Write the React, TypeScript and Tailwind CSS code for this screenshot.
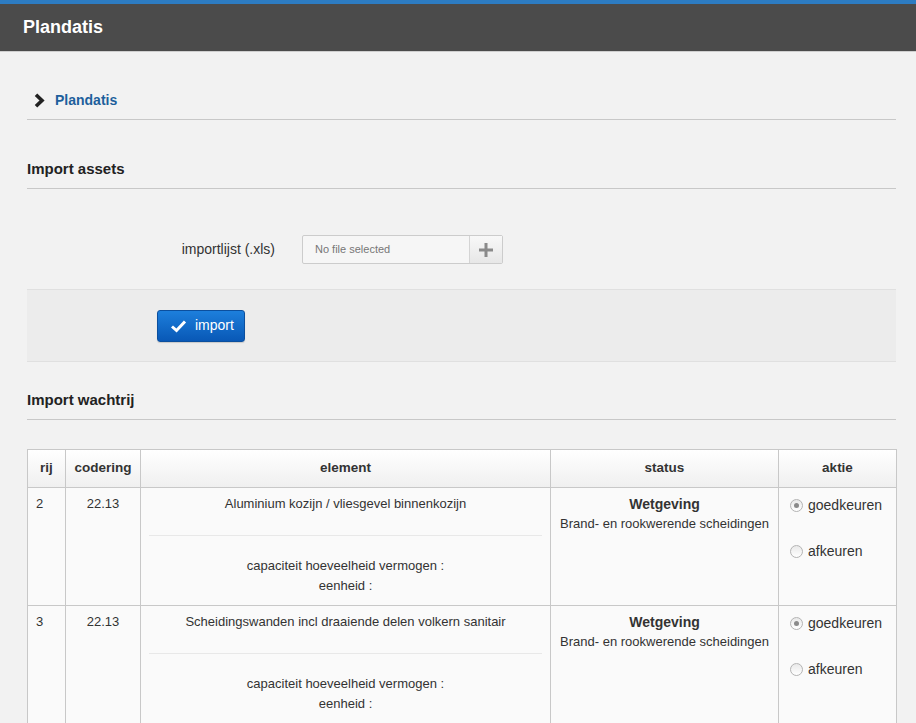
import * as React from "react";

const font = { fontFamily: '"Liberation Sans", Arial, sans-serif' };

interface QueueItem {
  rij: number;
  codering: string;
  element: string;
  status: string;
  detail: string;
}

const items: QueueItem[] = [
  {
    rij: 2,
    codering: "22.13",
    element: "Aluminium kozijn / vliesgevel binnenkozijn",
    status: "Wetgeving",
    detail: "Brand- en rookwerende scheidingen",
  },
  {
    rij: 3,
    codering: "22.13",
    element: "Scheidingswanden incl draaiende delen volkern sanitair",
    status: "Wetgeving",
    detail: "Brand- en rookwerende scheidingen",
  },
];

const Radio: React.FC<{ checked?: boolean; label: string }> = ({ checked, label }) => (
  <label className="flex items-center gap-[5px] h-5 cursor-pointer">
    <span className="relative w-[13px] h-[13px] rounded-full border border-[#b4b4b4] bg-gradient-to-b from-[#e9e9e9] to-[#ffffff] flex items-center justify-center">
      {checked && <span className="w-[5px] h-[5px] rounded-full bg-[#8a8a8a]" />}
    </span>
    <span className="text-[14px] text-[#333]">{label}</span>
  </label>
);

const SectionTitle: React.FC<{ children: React.ReactNode }> = ({ children }) => (
  <div className="border-b border-[#c8c8c8] pb-[9px]">
    <h2 className="text-[15px] font-bold text-[#222] leading-5">{children}</h2>
  </div>
);

const th = "border border-[#c8c8c8] font-bold text-[#333] text-[13.5px]";
const td = "border border-[#c8c8c8] px-[8px] pt-[6px] pb-[9px] leading-5";

export default function App() {
  return (
    <div className="min-h-[723px] bg-[#f2f2f2] text-[#333]" style={font}>
      <div className="h-[4px] bg-[#2d7cc2]" />
      <header className="h-[48px] bg-[#4b4b4b] border-b border-[#cfcfcf] flex items-center px-[23px]">
        <h1 className="text-[18px] font-bold text-white">Plandatis</h1>
      </header>

      <main className="px-[27px] pr-[20px]">
        <div className="flex items-end gap-[9px] h-[68px] pb-[9px] border-b border-[#c8c8c8]">
          <div className="h-5 flex items-center">
            <svg width="13" height="15" viewBox="0 0 13 15" className="ml-[6px]">
              <polyline points="3,1.8 9,7.5 3,13.2" fill="none" stroke="#222" strokeWidth="3.6" />
            </svg>
          </div>
          <span className="text-[14px] font-bold text-[#1d5f9c] leading-5">Plandatis</span>
        </div>

        <div className="pt-[39px]">
          <SectionTitle>Import assets</SectionTitle>
        </div>

        <div className="flex items-start h-[100px] pt-[46px]">
          <label className="w-[275px] h-[29px] flex items-center justify-end text-[14px] text-[#333] pr-[27px]">
            importlijst (.xls)
          </label>
          <div className="flex h-[29px] w-[201px] border border-[#cccccc] rounded-[2px] bg-[#f6f6f6]">
            <div className="flex-1 flex items-center pl-[12px] text-[11px] text-[#777]">No file selected</div>
            <button className="w-[33px] border-l border-[#d4d4d4] bg-gradient-to-b from-[#f8f8f8] to-[#e7e7e7] flex items-center justify-center">
              <svg width="16" height="16" viewBox="0 0 16 16">
                <rect x="6.5" y="1" width="3" height="14" fill="#8a8a8a" />
                <rect x="1" y="6.5" width="14" height="3" fill="#8a8a8a" />
              </svg>
            </button>
          </div>
        </div>

        <div className="h-[73px] bg-[#ececec] border-t border-b border-[#e0e0e0] flex items-center pl-[130px]">
          <button className="flex items-center gap-[8px] h-[32px] w-[88px] pl-[12px] rounded-[3px] border border-[#0b4f9e] bg-gradient-to-b from-[#1d7fdc] to-[#0958b6] text-white text-[14px] shadow-[0_1px_1px_rgba(0,0,0,0.15)]">
            <svg width="17" height="14" viewBox="0 0 17 14">
              <polyline points="2,7.5 6.5,11.5 15,2.5" fill="none" stroke="#fff" strokeWidth="3" />
            </svg>
            import
          </button>
        </div>

        <div className="pt-[28px]">
          <SectionTitle>Import wachtrij</SectionTitle>
        </div>

        <table className="mt-[29px] w-[869px] border-collapse text-[13px] table-fixed">
          <colgroup>
            <col className="w-[38px]" />
            <col className="w-[75px]" />
            <col className="w-[410px]" />
            <col className="w-[228px]" />
            <col className="w-[118px]" />
          </colgroup>
          <thead>
            <tr className="h-[38px] bg-gradient-to-b from-[#ffffff] to-[#efefef]">
              <th className={th}>rij</th>
              <th className={th}>codering</th>
              <th className={th}>element</th>
              <th className={th}>status</th>
              <th className={th}>aktie</th>
            </tr>
          </thead>
          <tbody>
            {items.map((item) => (
              <tr key={item.rij} className="bg-[#fafafa] align-top">
                <td className={td}>{item.rij}</td>
                <td className={`${td} text-center`}>{item.codering}</td>
                <td className={`${td} text-center`}>
                  <div className="pb-[21px]">{item.element}</div>
                  <div className="border-t border-[#e8e8e8] pt-[20px]">
                    <div>capaciteit hoeveelheid vermogen :</div>
                    <div>eenheid :</div>
                  </div>
                </td>
                <td className={`${td} text-center`}>
                  <div className="font-bold text-[14px]">{item.status}</div>
                  <div>{item.detail}</div>
                </td>
                <td className="border border-[#c8c8c8] pl-[11px] pt-[7px] pb-[9px]">
                  <div className="flex flex-col gap-[26px]">
                    <Radio checked label="goedkeuren" />
                    <Radio label="afkeuren" />
                  </div>
                </td>
              </tr>
            ))}
          </tbody>
        </table>
      </main>
    </div>
  );
}
